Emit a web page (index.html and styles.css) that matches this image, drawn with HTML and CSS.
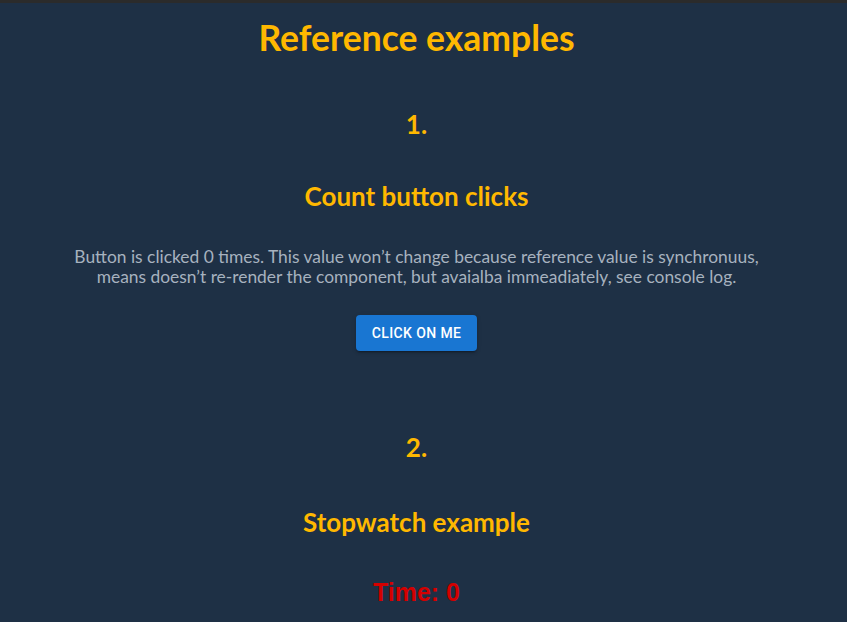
FILE: index.html
```html
<!DOCTYPE html>
<html>
<head>
<meta charset="utf-8">
<link rel="stylesheet" href="styles.css">
</head>
<body>
<div class="topbar"></div>
<main class="page">
  <h1 class="title">Reference examples</h1>
  <section class="example">
    <h2 class="num">1.</h2>
    <h2 class="subtitle">Count button clicks</h2>
    <p class="desc">Button is clicked 0 times. This value won’t change because reference value is synchronuus,<br>means doesn’t re-render the component, but avaialba immeadiately, see console log.</p>
    <button class="btn">Click on me</button>
  </section>
  <section class="example second">
    <h2 class="num">2.</h2>
    <h2 class="subtitle">Stopwatch example</h2>
    <div class="time">Time: 0</div>
  </section>
</main>
</body>
</html>
```
FILE: styles.css
```css
html, body {
  margin: 0;
  padding: 0;
  background: #1e3045;
  height: 100%;
  overflow: hidden;
}
body {
  font-family: "Lato", "Open Sans", sans-serif;
  padding-right: 14px;
  box-sizing: border-box;
}
.topbar {
  height: 3px;
  margin-right: -14px;
  background: #2b2b2b;
}
.page {
  display: flex;
  flex-direction: column;
  align-items: center;
  text-align: center;
}
.title {
  margin: 14px 0 0;
  font-size: 35.5px;
  line-height: 42px;
  color: #ffb800;
  font-weight: 700;
}
.example {
  display: flex;
  flex-direction: column;
  align-items: center;
}
.num {
  margin: 50px 0 0;
  font-size: 26px;
  line-height: 30px;
  color: #ffb800;
  font-weight: 700;
}
.subtitle {
  margin: 42px 0 0;
  font-size: 26px;
  line-height: 30px;
  color: #ffb800;
  font-weight: 700;
}
.desc {
  margin: 36px 0 0;
  font-size: 17.4px;
  line-height: 20px;
  color: #a7b2bf;
}
.btn {
  margin-top: 28px;
  height: 36px;
  padding: 0 16px;
  border: none;
  border-radius: 4px;
  background: #1976d2;
  color: #fff;
  font-family: "Roboto", sans-serif;
  font-weight: 500;
  font-size: 14px;
  letter-spacing: 0.4px;
  text-transform: uppercase;
  box-shadow: 0 3px 1px -2px rgba(0,0,0,0.2), 0 2px 2px 0 rgba(0,0,0,0.14), 0 1px 5px 0 rgba(0,0,0,0.12);
}
.second .num {
  margin-top: 81px;
}
.second .subtitle {
  margin-top: 45px;
}
.time {
  margin-top: 41px;
  font-family: "Liberation Sans", Arial, sans-serif;
  font-weight: 700;
  font-size: 25px;
  line-height: 28px;
  color: #d40000;
}
```
